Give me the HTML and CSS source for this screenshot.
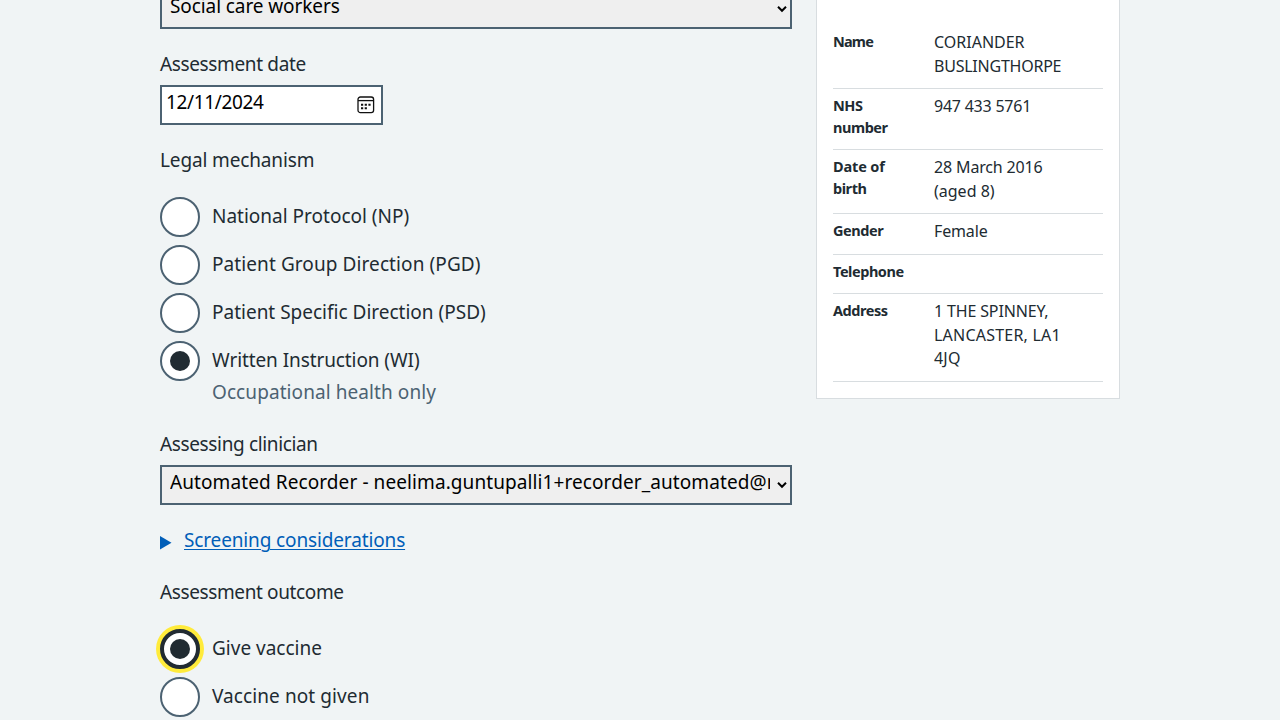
FILE: index.html
```html
<!DOCTYPE html>
<html lang="en">
<head>
<meta charset="utf-8">
<title>Assessment</title>
<link rel="stylesheet" href="styles.css">
</head>
<body>
<div class="page">
  <main class="form">
    <div class="select select-first"><span class="select-text snug">Social care workers</span>
      <svg class="chevron" width="10" height="8" viewBox="0 0 10 8"><path d="M1 1.8 5 5.8 9 1.8" fill="none" stroke="#000" stroke-width="2"/></svg></div>

    <div class="label label-date tight">Assessment date</div>
    <div class="date"><span class="date-text">12/11/2024</span>
      <svg width="18" height="18" viewBox="0 0 18 18"><rect x="1" y="1" width="15.6" height="15.6" rx="2.4" fill="none" stroke="#111" stroke-width="1.3"/><path d="M1 4.6h15.6" stroke="#111" stroke-width="1.3"/><path d="M4 7.7h2.2v2H4zM7.7 7.7h2.2v2H7.7zM11.4 7.7h2.2v2h-2.2zM4 11.3h2.2v2H4zM7.7 11.3h2.2v2H7.7z" fill="#111"/></svg></div>

    <div class="legend legend-mechanism">Legal mechanism</div>
    <div class="radios">
      <div class="radio"><span class="dot"></span><span>National Protocol (NP)</span></div>
      <div class="radio"><span class="dot"></span><span class="wide">Patient Group Direction (PGD)</span></div>
      <div class="radio"><span class="dot"></span><span>Patient Specific Direction (PSD)</span></div>
      <div class="radio"><span class="dot checked"></span><span class="snug">Written Instruction (WI)</span></div>
    </div>
    <div class="hint">Occupational health only</div>

    <div class="label tight label-clinician">Assessing clinician</div>
    <div class="select"><span class="select-text wide">Automated Recorder - neelima.guntupalli1+recorder_automated@nhs.net</span>
      <svg class="chevron" width="10" height="8" viewBox="0 0 10 8"><path d="M1 1.8 5 5.8 9 1.8" fill="none" stroke="#000" stroke-width="2"/></svg></div>

    <div class="details"><svg width="12" height="14" viewBox="0 0 12 14"><path d="M0 0v13.5l11.5-6.75z" fill="#005eb8"/></svg><span class="details-text">Screening considerations</span></div>

    <div class="legend tight legend-outcome">Assessment outcome</div>
    <div class="radios">
      <div class="radio"><span class="dot checked focused"></span><span>Give vaccine</span></div>
      <div class="radio"><span class="dot"></span><span class="wide">Vaccine not given</span></div>
    </div>
  </main>

  <aside class="card">
    <dl class="summary">
      <div class="row row-name"><dt class="key-name">Name</dt><dd>CORIANDER<br><span class="squeeze">BUSLINGTHORPE</span></dd></div>
      <div class="row row-nhs"><dt>NHS<br>number</dt><dd class="squeeze">947 433 5761</dd></div>
      <div class="row row-birth"><dt><span class="key-date">Date of</span><br>birth</dt><dd><span class="slight">28 March 2016</span><br>(aged 8)</dd></div>
      <div class="row row-gender"><dt>Gender</dt><dd class="slight">Female</dd></div>
      <div class="row row-phone"><dt>Telephone</dt><dd></dd></div>
      <div class="row row-address"><dt>Address</dt><dd><span class="slight">1 THE SPINNEY,</span><br><span class="loose">LANCASTER, LA1</span><br><span class="loose">4JQ</span></dd></div>
    </dl>
  </aside>
</div>
</body>
</html>
```
FILE: styles.css
```css
* { box-sizing: border-box; }
body {
  margin: 0;
  height: 720px;
  overflow: hidden;
  background: #f0f4f5;
  color: #212b32;
  font: 19px/28px "Noto Sans", sans-serif;
}
.page {
  width: 960px;
  margin: 0 auto;
  display: flex;
  justify-content: space-between;
  align-items: flex-start;
}
.form { width: 632px; }
.select {
  display: flex;
  align-items: flex-start;
  height: 40px;
  padding: 1px 4px 0 8px;
  border: 2px solid #4c6272;
  background: #efefef;
  color: #000;
}
.select-first { margin-top: -11px; }
.select-text {
  flex: 0 0 600px;
  overflow: hidden;
  white-space: nowrap;
}
.chevron { margin: 13px 0 0 7px; flex: none; }
.label { margin: 20px 0 8px; }
.label-date { margin: 21px 0 7px; }
.tight { letter-spacing: -0.36px; }
.wide { letter-spacing: 0.09px; }
.snug { letter-spacing: -0.09px; }
.date {
  display: flex;
  justify-content: space-between;
  width: 223px;
  height: 40px;
  padding: 1px 6px 0 4px;
  border: 2px solid #4c6272;
  background: #fff;
  color: #000;
}
.date svg { margin-top: 8px; }
.date-text { letter-spacing: -0.35px; }
.legend-mechanism { margin: 21px 0 23px; letter-spacing: -0.14px; }
.radios { display: flex; flex-direction: column; gap: 8px; }
.radio {
  display: flex;
  gap: 12px;
  height: 40px;
  line-height: 39px;
}
.dot {
  display: flex;
  width: 40px;
  height: 40px;
  border: 2px solid #4c6272;
  border-radius: 50%;
  background: #fff;
}
.checked::after {
  content: "";
  width: 20px;
  height: 20px;
  margin: auto;
  border-radius: 50%;
  background: #212b32;
}
.focused { border: 4px solid #212b32; box-shadow: 0 0 0 4px #ffeb3b; }
.hint { margin: -3px 0 0 52px; color: #4c6272; letter-spacing: 0.08px; }
.label-clinician { margin-top: 24px; margin-bottom: 7px; }
.details {
  display: flex;
  gap: 12px;
  margin-top: 21px;
  color: #005eb8;
}
.details svg { margin-top: 10px; }
.details-text {
  letter-spacing: -0.14px;
  text-decoration: underline;
  text-decoration-thickness: 1px;
  text-underline-offset: 2px;
}
.legend-outcome { margin: 24px 0 23px; letter-spacing: -0.38px; }
.card {
  width: 304px;
  height: 399px;
  padding: 25px 16px 0;
  border: 1px solid #d8dde0;
  border-top: 0;
  background: #fff;
}
.summary { margin: 0; }
.row {
  display: grid;
  grid-template-columns: 101px 1fr;
  padding-top: 5px;
  border-bottom: 1px solid #d8dde0;
}
.row dt {
  font-size: 14.5px;
  font-weight: 700;
  line-height: 22px;
  letter-spacing: -0.45px;
}
.row dd {
  margin: 1px 0 0;
  font-size: 16px;
  line-height: 23.7px;
  white-space: nowrap;
}
.row .key-name { letter-spacing: -0.8px; }
.row .key-date { letter-spacing: -0.15px; }
.row .squeeze { letter-spacing: -0.23px; }
.row .slight { letter-spacing: -0.15px; }
.loose { letter-spacing: 0.22px; }
.row-name { height: 64px; }
.row-nhs { height: 61px; }
.row-birth { height: 64px; }
.row-gender { height: 41px; }
.row-phone { height: 39px; }
.row-address { height: 88px; }
```
